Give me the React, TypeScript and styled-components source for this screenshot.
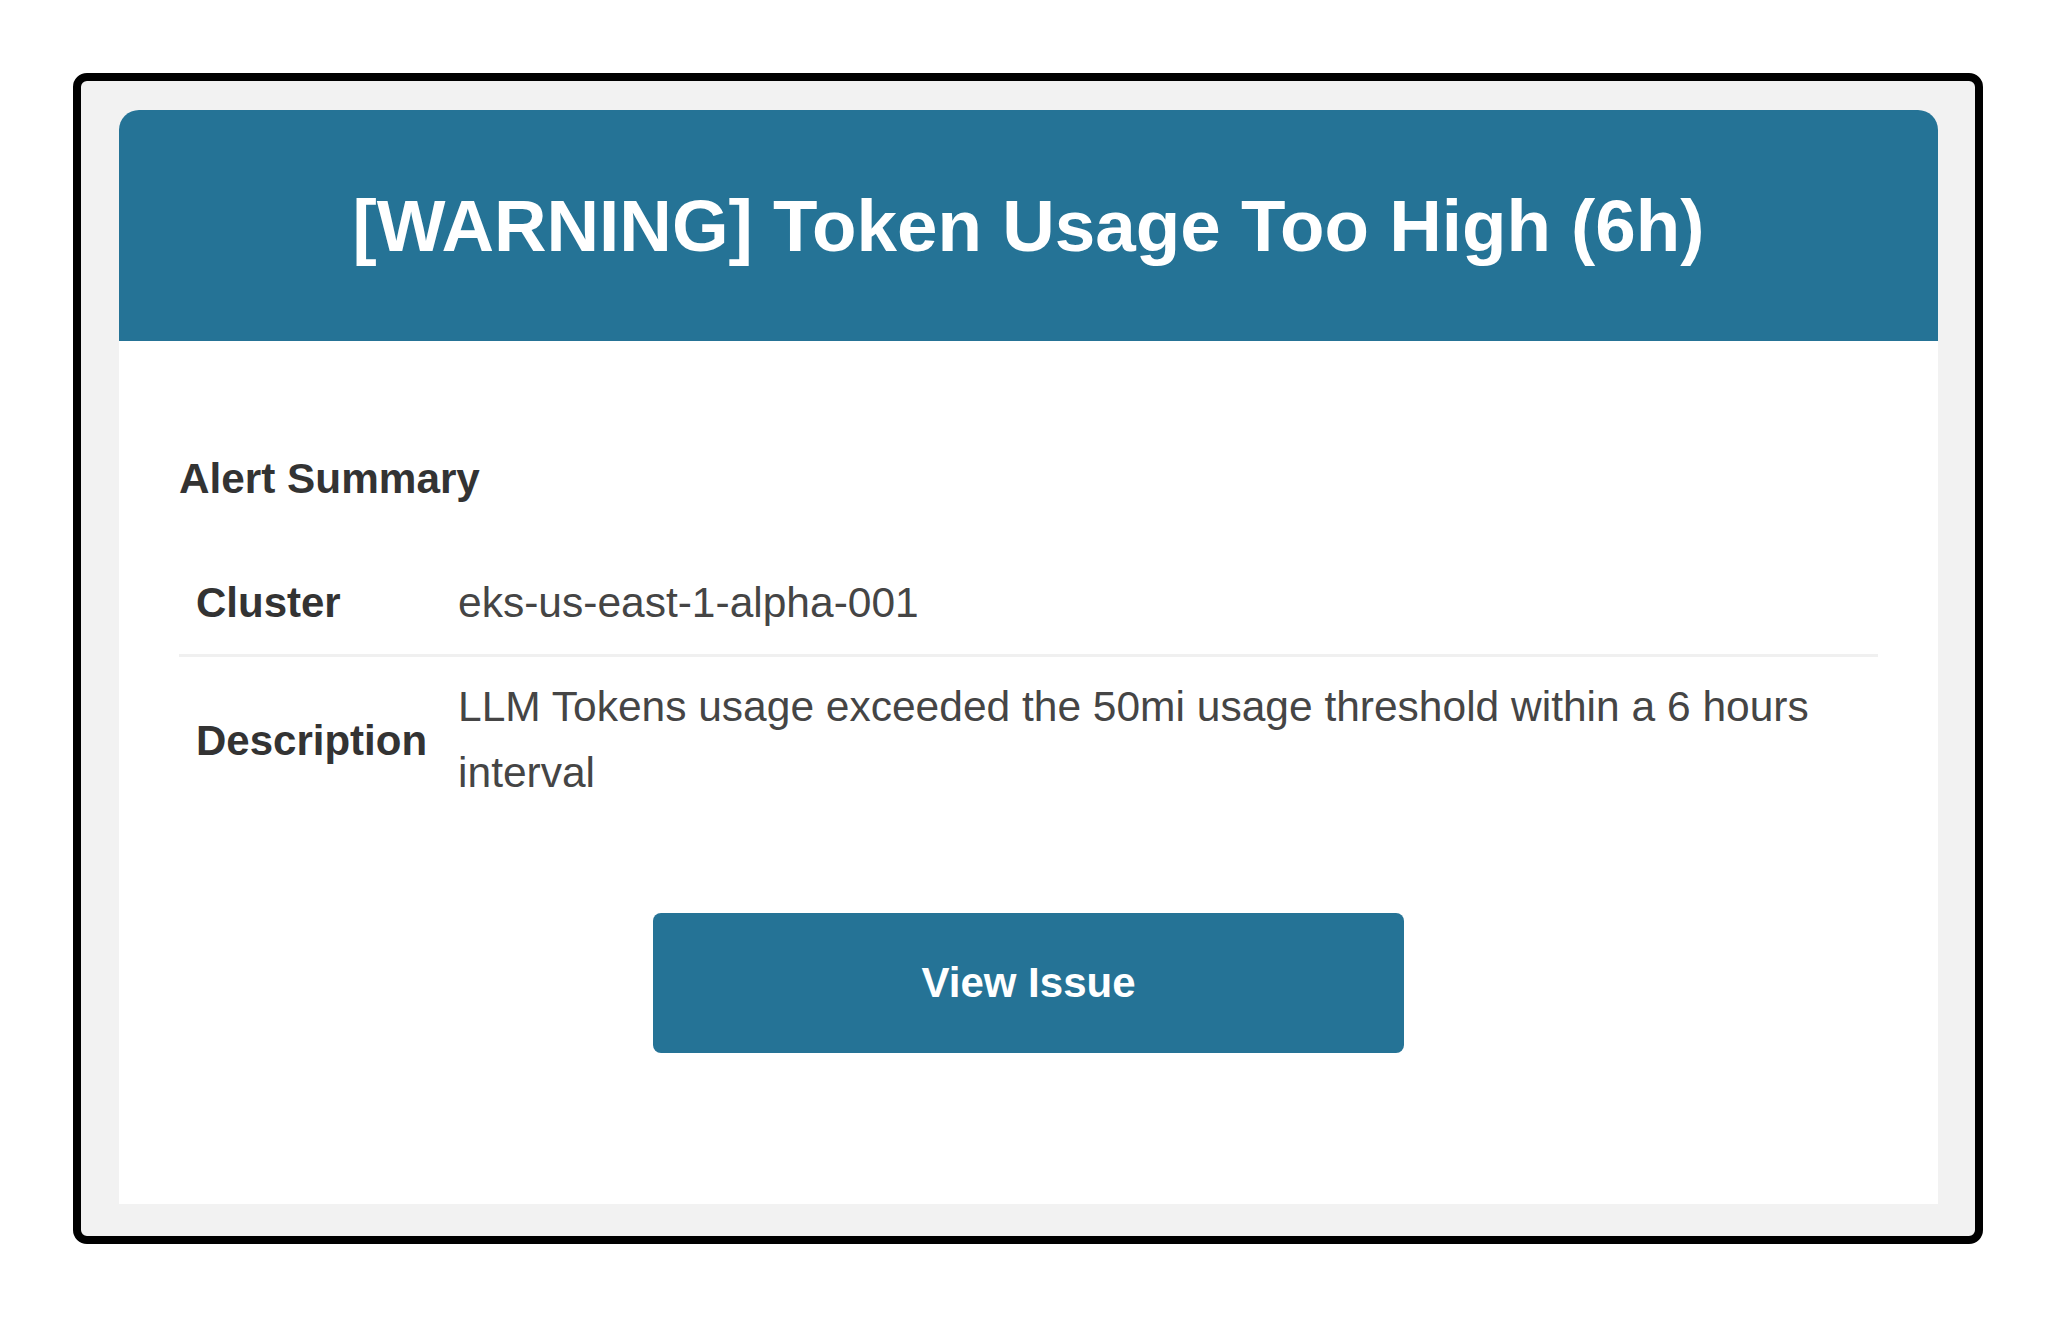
import React from "react";
import styled, { createGlobalStyle } from "styled-components";

const GlobalStyle = createGlobalStyle`
  html, body {
    margin: 0;
    padding: 0;
    background: #ffffff;
    font-family: "Liberation Sans", Arial, sans-serif;
  }
`;

const Page = styled.div`
  padding: 73px 0 0 73px;
`;

const Frame = styled.div`
  box-sizing: border-box;
  width: 1910px;
  border: 8px solid #000000;
  border-radius: 14px;
  background: #f2f2f2;
  padding: 29px 37px 32px 38px;
`;

const Card = styled.div`
  background: #ffffff;
  border-radius: 20px 20px 0 0;
  overflow: hidden;
`;

const Header = styled.div`
  background: #257396;
  padding: 75px 20px;
  text-align: center;
`;

const Title = styled.h1`
  margin: 0;
  color: #ffffff;
  font-size: 72.8px;
  line-height: 81px;
  font-weight: 700;
`;

const Body = styled.div`
  padding: 60px 60px 60px;
`;

const SectionTitle = styled.h2`
  margin: 54px 0 50px;
  color: #333333;
  font-size: 42.3px;
  line-height: 47px;
  font-weight: 700;
`;

const Table = styled.table`
  width: 100%;
  border-collapse: collapse;
`;

const Row = styled.tr<{ $divider?: boolean }>`
  & > td {
    border-bottom: ${(p) => (p.$divider ? "3px solid #f0f0f0" : "none")};
  }
`;

const Label = styled.td`
  padding: 18px 16px 18px 17px;
  white-space: nowrap;
  vertical-align: middle;
  color: #333333;
  font-size: 42px;
  line-height: 66px;
  font-weight: 700;
`;

const Value = styled.td`
  width: 100%;
  padding: 17px 16px 18px 15px;
  vertical-align: middle;
  color: #454545;
  font-size: 42.5px;
  line-height: 66px;
`;

const Actions = styled.div`
  display: flex;
  justify-content: center;
  margin: 89px 0 91px;
`;

const Button = styled.a`
  display: flex;
  align-items: center;
  justify-content: center;
  width: 751px;
  height: 140px;
  border-radius: 8px;
  background: #257396;
  color: #ffffff;
  font-size: 42px;
  font-weight: 700;
  text-decoration: none;
`;

const rows = [
  { label: "Cluster", value: "eks-us-east-1-alpha-001" },
  {
    label: "Description",
    value: "LLM Tokens usage exceeded the 50mi usage threshold within a 6 hours interval",
  },
];

export default function App() {
  return (
    <Page>
      <GlobalStyle />
      <Frame>
        <Card>
          <Header>
            <Title>[WARNING] Token Usage Too High (6h)</Title>
          </Header>
          <Body>
            <SectionTitle>Alert Summary</SectionTitle>
            <Table>
              <tbody>
                {rows.map((r, i) => (
                  <Row key={r.label} $divider={i < rows.length - 1}>
                    <Label>{r.label}</Label>
                    <Value>{r.value}</Value>
                  </Row>
                ))}
              </tbody>
            </Table>
            <Actions>
              <Button href="#">View Issue</Button>
            </Actions>
          </Body>
        </Card>
      </Frame>
    </Page>
  );
}
